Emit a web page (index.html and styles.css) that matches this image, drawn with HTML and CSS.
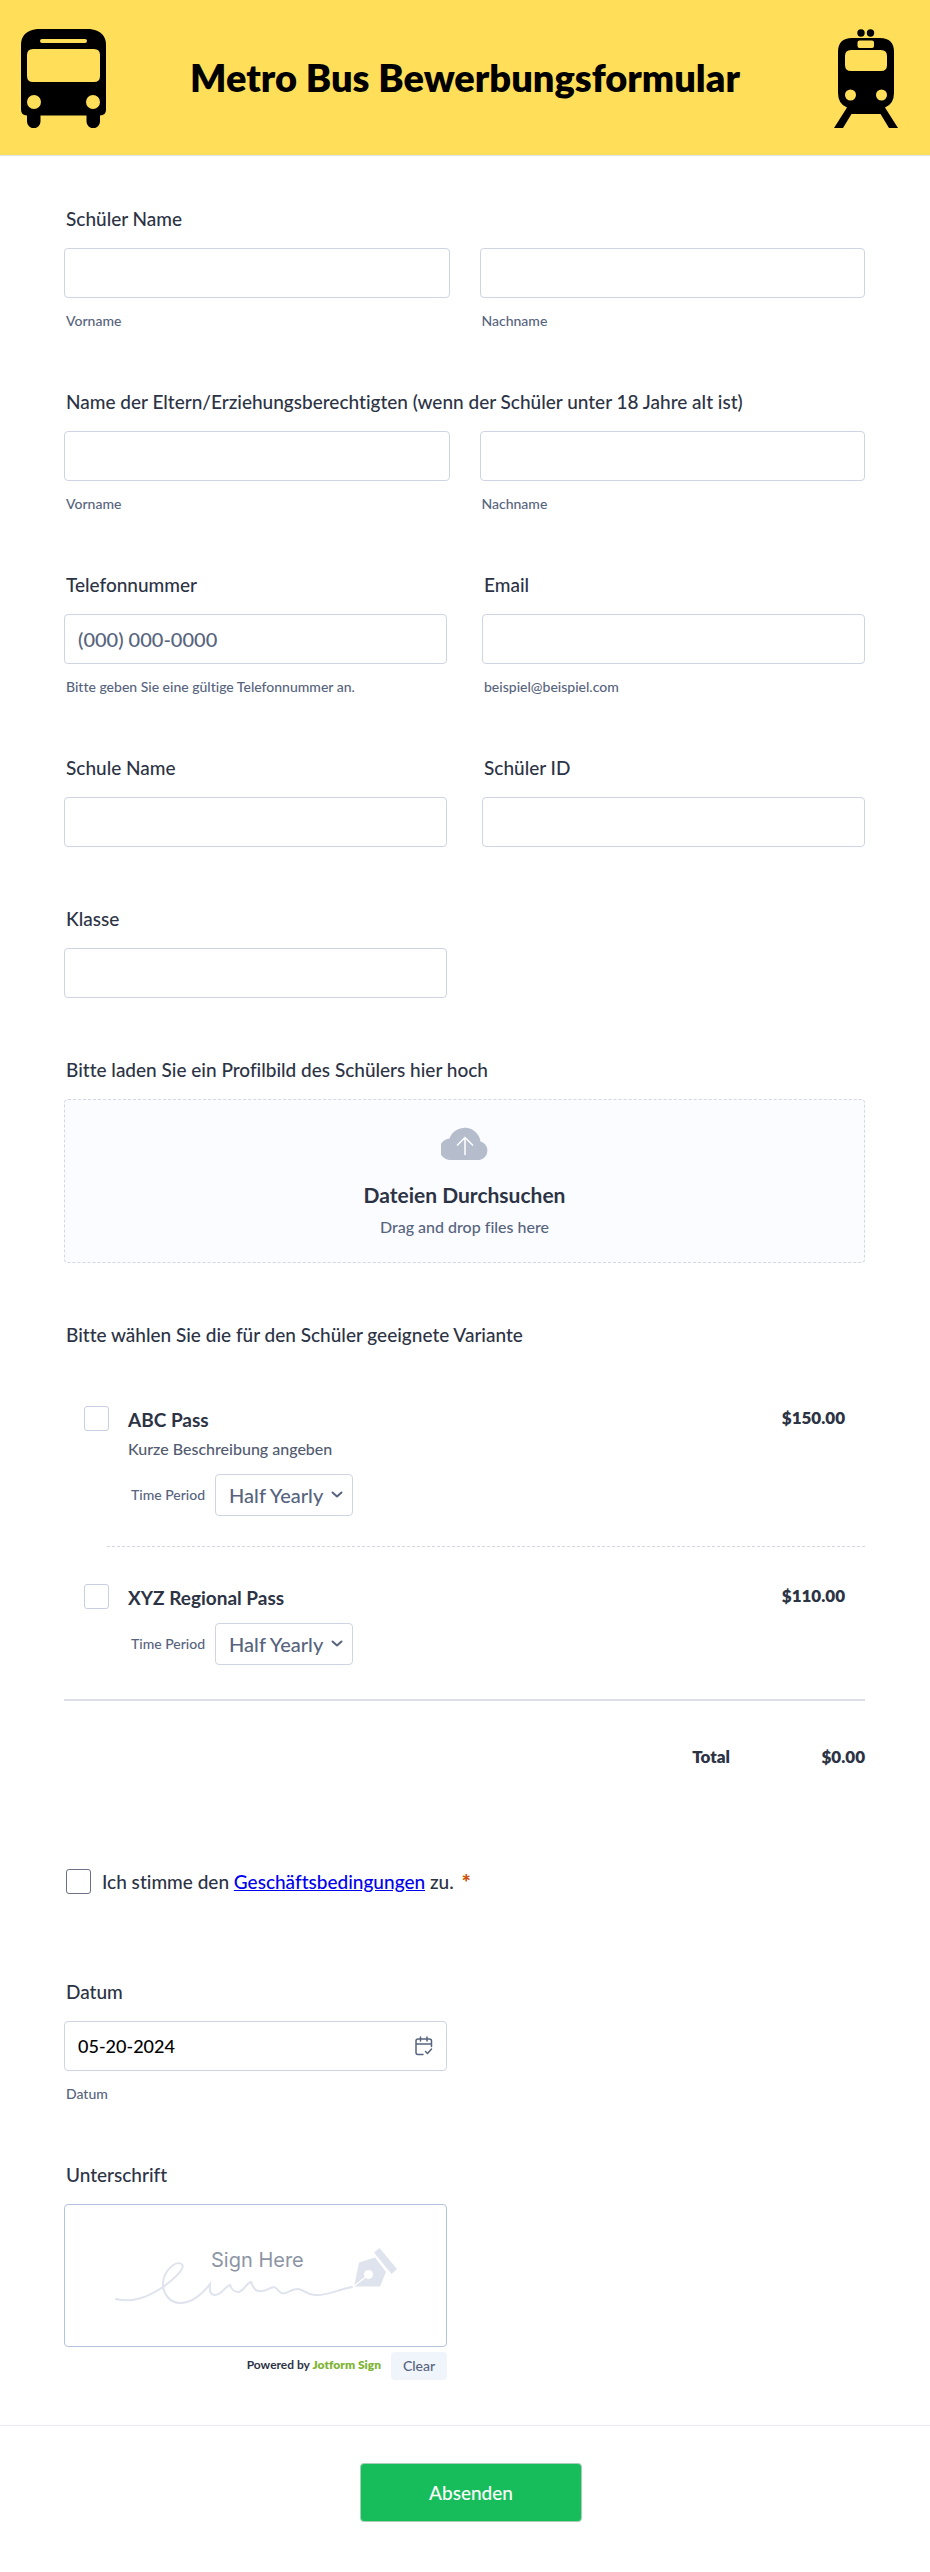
FILE: index.html
```html
<!DOCTYPE html>
<html lang="de">
<head>
<meta charset="utf-8">
<meta name="viewport" content="width=device-width, initial-scale=1">
<title>Metro Bus Bewerbungsformular</title>
<link rel="stylesheet" href="styles.css">
</head>
<body>
<header class="header">
  <svg class="header-icon" width="85" height="99" viewBox="0 0 85 99" aria-hidden="true">
    <path fill-rule="evenodd" d="M16 0H69Q85 2 85 16V81Q85 86 79 86.500V92.500A6.500 6.500 0 0 1 65.500 92.500V86.500H19.500V92.500A6.500 6.500 0 0 1 6 92.500V86.500Q0 86 0 81V16Q0 2 16 0ZM21 10Q19 10 19 12T21 14H64Q66 14 66 12T64 10ZM12 20Q6 20 6 26V47Q6 53 12 53H73Q79 53 79 47V26Q79 20 73 20ZM13 66A7 7 0 1 0 13 80A7 7 0 1 0 13 66ZM72 66A7 7 0 1 0 72 80A7 7 0 1 0 72 66Z"/>
  </svg>
  <h1 class="title">Metro Bus Bewerbungsformular</h1>
  <svg class="header-icon train" width="64" height="99" viewBox="0 0 64 99" aria-hidden="true">
    <circle cx="27" cy="4" r="3.700"/><circle cx="36.500" cy="4" r="3.700"/>
    <path fill-rule="evenodd" d="M18 9H46Q60 9 60 23V64Q60 75 51 78.500L64 99H55L46.500 85H17.500L9 99H0L13 78.500Q4 75 4 64V23Q4 9 18 9ZM25.500 11.500Q23.500 11.500 23.500 13.500V17Q23.500 19 25.500 19H38Q40 19 40 17V13.500Q40 11.500 38 11.500ZM17 21Q11 21 11 27V36Q11 42 17 42H47Q53 42 53 36V27Q53 21 47 21ZM16.500 60.500A5.500 5.500 0 1 0 16.500 71.500A5.500 5.500 0 1 0 16.500 60.500ZM47.500 60.500A5.500 5.500 0 1 0 47.500 71.500A5.500 5.500 0 1 0 47.500 60.500Z"/>
  </svg>
</header>

<form class="form">
  <div class="fields">
    <fieldset class="group">
      <legend class="label">Schüler Name</legend>
      <div class="names">
        <div class="cell"><input class="input" id="first" type="text"><label class="sub" for="first">Vorname</label></div>
        <div class="cell"><input class="input" id="last" type="text"><label class="sub" for="last">Nachname</label></div>
      </div>
    </fieldset>

    <fieldset class="group">
      <legend class="label">Name der Eltern/Erziehungsberechtigten (wenn der Schüler unter 18 Jahre alt ist)</legend>
      <div class="names">
        <div class="cell"><input class="input" id="pfirst" type="text"><label class="sub" for="pfirst">Vorname</label></div>
        <div class="cell"><input class="input" id="plast" type="text"><label class="sub" for="plast">Nachname</label></div>
      </div>
    </fieldset>

    <div class="columns">
      <div class="cell"><label class="label" for="phone">Telefonnummer</label><input class="input" id="phone" type="tel" placeholder="(000) 000-0000"><label class="sub" for="phone">Bitte geben Sie eine gültige Telefonnummer an.</label></div>
      <div class="cell"><label class="label" for="email">Email</label><input class="input" id="email" type="email"><label class="sub" for="email">beispiel@beispiel.com</label></div>
    </div>

    <div class="columns">
      <div class="cell"><label class="label" for="school">Schule Name</label><input class="input" id="school" type="text"></div>
      <div class="cell"><label class="label" for="sid">Schüler ID</label><input class="input" id="sid" type="text"></div>
    </div>

    <div class="columns">
      <div class="cell"><label class="label" for="grade">Klasse</label><input class="input" id="grade" type="text"></div>
    </div>

    <div class="cell">
      <span class="label" id="upload-label">Bitte laden Sie ein Profilbild des Schülers hier hoch</span>
      <button class="upload" type="button" aria-describedby="upload-label">
        <svg width="48" height="33" viewBox="0 0 48 33" aria-hidden="true">
          <path fill="#b5bdcc" d="M10.500 33A10.500 10.500 0 0 1 8.500 11.500A16 16 0 0 1 39.500 14.500A9.500 9.500 0 0 1 38.500 33Z"/>
          <path fill="none" stroke="#fff" stroke-width="1.500" d="M24 28V10.500M16 18.500L24 10.500L32 18.500"/>
        </svg>
        <span class="upload-title">Dateien Durchsuchen</span>
        <span class="upload-hint">Drag and drop files here</span>
      </button>
    </div>

    <fieldset class="group products">
      <legend class="label">Bitte wählen Sie die für den Schüler geeignete Variante</legend>
      <div class="product">
        <input class="check" id="abc" type="checkbox">
        <div class="details">
          <label class="name" for="abc">ABC Pass</label>
          <p class="desc">Kurze Beschreibung angeben</p>
          <div class="option">
            <label class="option-label" for="abc-period">Time Period</label>
            <span class="picker"><select class="select" id="abc-period"><option>Half Yearly</option><option>Yearly</option></select>
            <svg class="chevron" width="12" height="8" viewBox="0 0 12 8" aria-hidden="true"><path d="M1.500 1.500L6 5.500L10.500 1.500"/></svg></span>
          </div>
        </div>
        <span class="price">$150.00</span>
      </div>
      <hr class="dashed">
      <div class="product">
        <input class="check" id="xyz" type="checkbox">
        <div class="details">
          <label class="name" for="xyz">XYZ Regional Pass</label>
          <div class="option">
            <label class="option-label" for="xyz-period">Time Period</label>
            <span class="picker"><select class="select" id="xyz-period"><option>Half Yearly</option><option>Yearly</option></select>
            <svg class="chevron" width="12" height="8" viewBox="0 0 12 8" aria-hidden="true"><path d="M1.500 1.500L6 5.500L10.500 1.500"/></svg></span>
          </div>
        </div>
        <span class="price">$110.00</span>
      </div>
      <div class="total"><span>Total</span><span class="amount">$0.00</span></div>
    </fieldset>

    <div class="terms">
      <input class="check dark" id="terms" type="checkbox" required>
      <label for="terms">Ich stimme den <a href="#terms">Geschäftsbedingungen</a> zu.</label>
      <span class="star">*</span>
    </div>

    <div class="columns">
      <div class="cell">
        <label class="label" for="date">Datum</label>
        <div class="date">
          <input class="input" id="date" type="text" value="05-20-2024">
          <button class="calendar" type="button" aria-label="Kalender">
            <svg width="18" height="20" viewBox="0 0 18 20" aria-hidden="true"><path d="M8 18.500H3Q1 18.500 1 16.500V5Q1 3 3 3H14.500Q16.500 3 16.500 5V10.500M1 8H16.500M5.500 1V5M12 1V5M10.500 15.500L12.500 17.500L16.500 13"/></svg>
          </button>
        </div>
        <label class="sub" for="date">Datum</label>
      </div>
    </div>

    <div class="columns">
      <div class="cell">
        <span class="label">Unterschrift</span>
        <div class="pad">
          <svg width="282" height="56" viewBox="0 0 282 56" aria-label="Unterschriftsfeld">
            <path fill="none" stroke="#dfe3ed" stroke-width="2" stroke-linecap="round" d="M1 51C15 54 29 52 48 39C62 29 71 19 66.500 16C61 12 48 23 48 36C48 46 55 55 65 55C77 55 88 45 95 36C94 44 96 47 100 47C107 47 109 39 115 37C117 43 120 44 124 44C130 42 131 35 136 34C139 42 142 44 147 43C153 43 158 36 162 41C166 46 168 47 175 43C189 37 188 47 200 47C211 48 222 42 237 39"/>
            <path fill="#dfe3ed" d="M239 38.500L244 14.500L260 9.500L271 24L265 38.500ZM259 4.500L264.500 0L282 21L276.500 26Z"/>
            <circle cx="253.500" cy="26.500" r="4.500" fill="#fff"/>
            <path stroke="#fff" stroke-width="1.500" d="M253 27L238 39"/>
            <text class="sign-text" x="96" y="19">Sign Here</text>
          </svg>
        </div>
        <div class="pad-footer">
          <span class="powered">Powered by <b>Jotform Sign</b></span>
          <button class="clear" type="button">Clear</button>
        </div>
      </div>
    </div>
  </div>
  <footer class="footer"><button class="submit" type="submit">Absenden</button></footer>
</form>
</body>
</html>
```
FILE: styles.css
```css
* { box-sizing: border-box; }
body {
  margin: 0;
  background: #fff;
  color: #2c3345;
  font-family: Lato, "Open Sans", sans-serif;
  font-size: 19px;
  font-weight: 500;
  line-height: 24px;
  font-variant-ligatures: none;
}
input, select, button { font: inherit; color: inherit; }
.header {
  display: grid;
  grid-template-columns: 1fr auto 1fr;
  align-items: start;
  padding: 29px 21px 27px;
  background: #ffde59;
  border-bottom: 1px solid #e3e5ee;
}
.header-icon { display: block; }
.train { justify-self: end; margin-right: 11px; }
.title { margin: 24px 0 0; color: #000; font-size: 38px; line-height: 48px; font-weight: 800; }
.fields {
  display: flex;
  flex-direction: column;
  gap: 60px;
  padding: 51px 65px 45px 64px;
}
.group { min-width: 0; margin: 0; padding: 0; border: 0; }
.label { display: block; margin-bottom: 17px; padding: 0 0 0 2px; }
.names { display: grid; grid-template-columns: 1fr 1fr; gap: 30px; }
.columns { display: grid; grid-template-columns: 1fr 1fr; gap: 35px; }
.cell { display: flex; flex-direction: column; min-width: 0; }
.input {
  width: 100%;
  height: 50px;
  padding: 0 13px;
  border: 1px solid #cfd4e3;
  border-radius: 4px;
  background: #fff;
  color: #000;
  font-size: 20px;
}
.input::placeholder { color: #57647e; opacity: 1; }
.sub { margin-top: 14px; padding-left: 2px; color: #57647e; font-size: 14px; line-height: 18px; }
.upload {
  display: flex;
  flex-direction: column;
  align-items: center;
  padding: 27px 10px 23px;
  border: 1px dashed #d3d8e6;
  border-radius: 4px;
  background: #fbfcff;
}
.upload-title { margin-top: 21px; font-size: 21px; line-height: 28px; font-weight: 700; }
.upload-hint { margin-top: 6px; color: #57647e; font-size: 16px; }
.product { display: flex; align-items: flex-start; padding: 0 20px; }
.products .label { margin-bottom: 59px; }
.check {
  appearance: none;
  flex: none;
  width: 25px;
  height: 25px;
  margin: 0;
  border: 1px solid #c8cfe0;
  border-radius: 3px;
  background: #fff;
}
.check.dark { border-color: #6c7285; }
.details { flex: 1; padding: 2px 0 0 19px; }
.name { display: block; font-weight: 700; }
.desc { margin: 5px 0 0; color: #525b70; font-size: 16px; }
.option { display: flex; align-items: center; gap: 10px; margin-top: 13px; padding-left: 3px; }
.option-label { color: #57647e; font-size: 14px; }
.picker { display: grid; align-items: center; width: 138px; }
.select {
  grid-area: 1 / 1;
  appearance: none;
  width: 100%;
  height: 42px;
  padding: 0 13px;
  border: 1px solid #cfd4e3;
  border-radius: 4px;
  background: #fff;
  color: #57647e;
  font-size: 20px;
}
.chevron { grid-area: 1 / 1; justify-self: end; margin-right: 10px; pointer-events: none; }
.chevron path { fill: none; stroke: #57647e; stroke-width: 2; stroke-linecap: round; stroke-linejoin: round; }
.price { font-size: 17px; font-weight: 800; }
.dashed { margin: 30px 0 37px 43px; border: 0; border-top: 1px dashed #d3d8e6; }
.total {
  display: flex;
  justify-content: flex-end;
  margin-top: 34px;
  padding-top: 44px;
  border-top: 2px solid #dcdfea;
  font-size: 17px;
  font-weight: 800;
}
.amount { min-width: 135px; text-align: right; }
.terms { display: flex; align-items: center; padding: 40px 0 26px 2px; }
.terms label { margin-left: 11px; }
.terms a { color: #0000ee; }
.star { margin-left: 8px; color: #cf5208; font-size: 21px; font-weight: 800; }
.date { display: grid; align-items: center; }
.date .input { grid-area: 1 / 1; font-size: 18px; }
.calendar { grid-area: 1 / 1; justify-self: end; display: flex; margin-right: 14px; padding: 0; border: 0; background: none; }
.calendar path { fill: none; stroke: #57647e; stroke-width: 1.5; stroke-linecap: round; stroke-linejoin: round; }
.pad {
  display: flex;
  align-items: center;
  justify-content: center;
  height: 143px;
  border: 1px solid #b3c3de;
  border-radius: 4px;
}
.sign-text { fill: #8d95a5; font: 400 20px Inter, sans-serif; }
.pad-footer { display: flex; justify-content: flex-end; gap: 10px; margin-top: 5px; }
.powered { font-size: 12px; font-weight: 700; line-height: 26px; }
.powered b { color: #7fb536; font-weight: 800; }
.clear {
  width: 56px;
  height: 28px;
  padding: 0;
  border: 0;
  border-radius: 4px;
  background: #eff5fb;
  color: #57647e;
  font-size: 14px;
}
.footer { display: flex; justify-content: center; padding: 37px 0 50px 12px; border-top: 1px solid #e8ebf4; }
.submit {
  width: 222px;
  height: 59px;
  border: 1px solid #a9cdb9;
  border-radius: 4px;
  background: #18bd5b;
  color: #fff;
}
```
